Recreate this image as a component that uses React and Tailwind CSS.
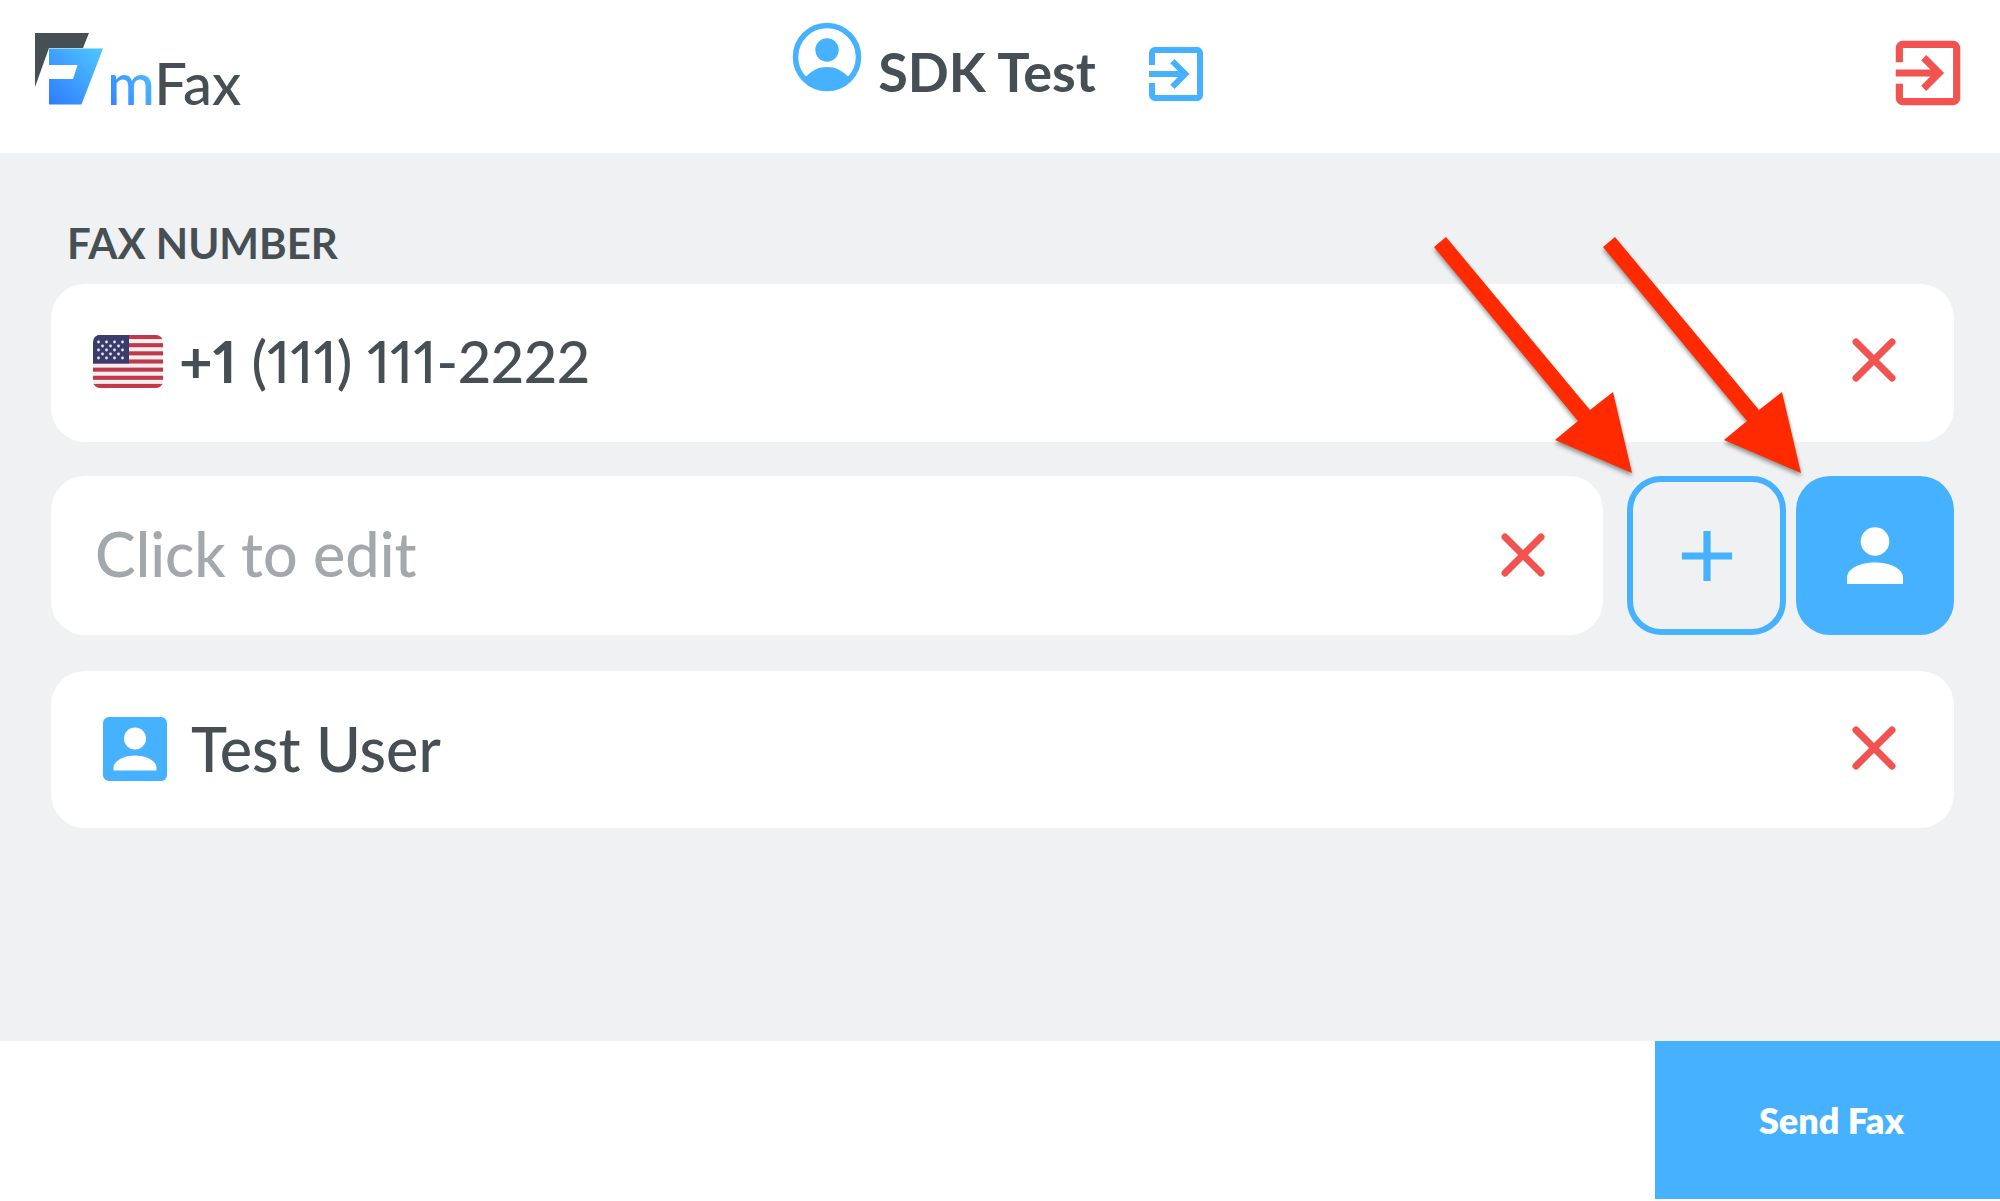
import { useId } from "react";
import { MdAdd, MdExitToApp } from "react-icons/md";

function LogoMark() {
  const id = useId();
  return (
    <svg viewBox="0 0 68 72" className="h-[72px] w-[68px]" aria-hidden="true">
      <defs>
        <linearGradient id={id} x1="0" y1="1" x2="1" y2="0">
          <stop offset="0" stopColor="#2f7bff" />
          <stop offset="1" stopColor="#4fc8ff" />
        </linearGradient>
      </defs>
      <path d="M0 0H54L48 15H14L0 54Z" fill="#464f54" />
      <path d="M14 15.500H68L46.500 71.500H14V46H38L42.500 32H14Z" fill={`url(#${id})`} />
    </svg>
  );
}

function ProfileIcon() {
  return (
    <svg viewBox="0 0 70 70" className="size-[70px]" aria-hidden="true">
      <circle cx="35" cy="35" r="31.500" fill="none" stroke="#45b1ff" strokeWidth="5.500" />
      <circle cx="35" cy="28" r="11.700" fill="#45b1ff" />
      <path d="M13 55.500C20 48 27 45 35 45S50 48 57 55.500C51 63 43 67.500 35 67.500S19 63 13 55.500Z" fill="#45b1ff" />
    </svg>
  );
}

function ContactIcon() {
  return (
    <svg viewBox="0 0 56 58" className="h-[58px] w-[56px]" fill="#fff" aria-hidden="true">
      <circle cx="28" cy="14.500" r="14.300" />
      <path d="M0 57V51C0 41 14 35.500 28 35.500S56 41 56 51V57Z" />
    </svg>
  );
}

function ContactCardIcon() {
  return (
    <svg viewBox="0 0 64 64" className="size-16 shrink-0" aria-hidden="true">
      <rect width="64" height="64" rx="6" fill="#45b1ff" />
      <circle cx="32" cy="21.500" r="11" fill="#fff" />
      <path d="M10.500 53.500V50.500C11 43 22 38.500 32 38.500S53 43 53.500 50.500V53.500Z" fill="#fff" />
    </svg>
  );
}

const STRIPES = [0, 1, 2, 3, 4, 5, 6];
const STAR_ROWS = [0, 1, 2, 3, 4];

function UsFlag() {
  const id = useId();
  return (
    <svg viewBox="0 0 70 53" className="h-[53px] w-[70px] shrink-0" role="img" aria-label="United States">
      <clipPath id={id}>
        <rect width="70" height="53" rx="7" />
      </clipPath>
      <g clipPath={`url(#${id})`}>
        <rect width="70" height="53" fill="#f0f0f0" />
        {STRIPES.map((i) => (
          <rect key={i} y={i * 8.15} width="70" height="4.08" fill="#c2384b" />
        ))}
        <rect width="36" height="28.500" fill="#3c3b6e" />
        {STAR_ROWS.map((r) =>
          (r % 2 ? [0, 1, 2] : [0, 1, 2, 3]).map((c) => (
            <circle key={`${r}-${c}`} cx={(r % 2 ? 9.5 : 5.5) + c * 8} cy={7 + r * 4} r="1.400" fill="#e8e8f0" />
          ))
        )}
      </g>
    </svg>
  );
}

function RemoveButton({ label }) {
  return (
    <button type="button" aria-label={label} className="shrink-0 pb-0.5">
      <svg viewBox="0 0 44 44" className="size-11" fill="none" stroke="#f05350" strokeWidth="7" strokeLinecap="round" aria-hidden="true">
        <path d="M4 4L40 40M40 4L4 40" />
      </svg>
    </button>
  );
}

function Arrow() {
  return (
    <svg
      viewBox="0 0 200 240"
      className="pointer-events-none absolute -top-60 -left-48 h-60 w-[200px] overflow-visible drop-shadow-[0_3px_2px_rgba(0,0,0,0.4)]"
      aria-hidden="true"
    >
      <path d="M-1 11L11 1L155 174L178 156L197 237L120 204L143 185Z" fill="#ff2a00" />
    </svg>
  );
}

export default function App() {
  return (
    <div className="flex min-h-screen flex-col bg-[#eff1f3] font-['Lato',sans-serif] text-[#464f54]">
      <header className="grid h-[153px] grid-cols-[1fr_auto_1fr] items-start bg-white">
        <div className="flex items-end pt-[33px] pl-[35px]">
          <LogoMark />
          <span className="ml-1 text-[58px] leading-[45px]">
            <span className="bg-gradient-to-tr from-[#2f7bff] to-[#5fc8ff] bg-clip-text font-medium text-transparent">m</span>
            <span className="font-medium">Fax</span>
          </span>
        </div>
        <div className="flex items-start pl-1">
          <div className="pt-[22px]">
            <ProfileIcon />
          </div>
          <h1 className="ml-4 pt-10 text-[54px] leading-[64px] font-bold">SDK Test</h1>
          <button type="button" aria-label="Switch account" className="ml-11 pt-[38px] text-[#45b1ff]">
            <MdExitToApp className="size-[72px]" />
          </button>
        </div>
        <button type="button" aria-label="Log out" className="mr-[29px] justify-self-end pt-[30px] text-[#f05350]">
          <MdExitToApp className="size-[86px]" />
        </button>
      </header>

      <main className="flex-1 px-[46px] pt-[66px] pl-[51px]">
        <h2 className="mb-[17px] pl-4 text-[42px] leading-[48px] font-bold">
          <label htmlFor="fax-number">FAX NUMBER</label>
        </h2>

        <div className="flex h-[158px] items-center rounded-[34px] bg-white pr-[58px] pb-1 pl-[42px]">
          <UsFlag />
          <p className="flex-1 pl-4 text-[58px] leading-[72px] proportional-nums">
            <span className="font-bold">+1</span> <span className="font-medium">(111) 111-2222</span>
          </p>
          <RemoveButton label="Remove +1 (111) 111-2222" />
        </div>

        <div className="mt-[34px] flex h-[159px]">
          <div className="flex flex-1 items-center rounded-[34px] bg-white pr-[58px] pl-11">
            <input
              id="fax-number"
              type="text"
              placeholder="Click to edit"
              className="min-w-0 flex-1 bg-transparent pb-1 text-[61px] leading-[72px] font-medium outline-none placeholder:text-[#a2a8ab]"
            />
            <RemoveButton label="Remove empty recipient" />
          </div>
          <div className="relative ml-6 flex">
            <button
              type="button"
              aria-label="Add recipient"
              className="flex w-[159px] items-center justify-center rounded-[34px] border-6 border-[#45b1ff] text-[#45b1ff]"
            >
              <MdAdd className="size-[86px]" />
            </button>
            <Arrow />
          </div>
          <div className="relative ml-[10px] flex">
            <button
              type="button"
              aria-label="Choose from contacts"
              className="flex w-[158px] items-center justify-center rounded-[34px] bg-[#45b1ff]"
            >
              <ContactIcon />
            </button>
            <Arrow />
          </div>
        </div>

        <div className="mt-9 flex h-[157px] items-center rounded-[34px] bg-white pr-[58px] pb-0.5 pl-[52px]">
          <ContactCardIcon />
          <p className="flex-1 pl-6 text-[61px] leading-[72px] font-medium">Test User</p>
          <RemoveButton label="Remove Test User" />
        </div>
      </main>

      <footer className="flex h-[160px] justify-end bg-white pb-[2px]">
        <button type="button" className="w-[345px] bg-[#45b1ff] pl-2 text-[36px] font-extrabold text-white">
          Send Fax
        </button>
      </footer>
    </div>
  );
}
